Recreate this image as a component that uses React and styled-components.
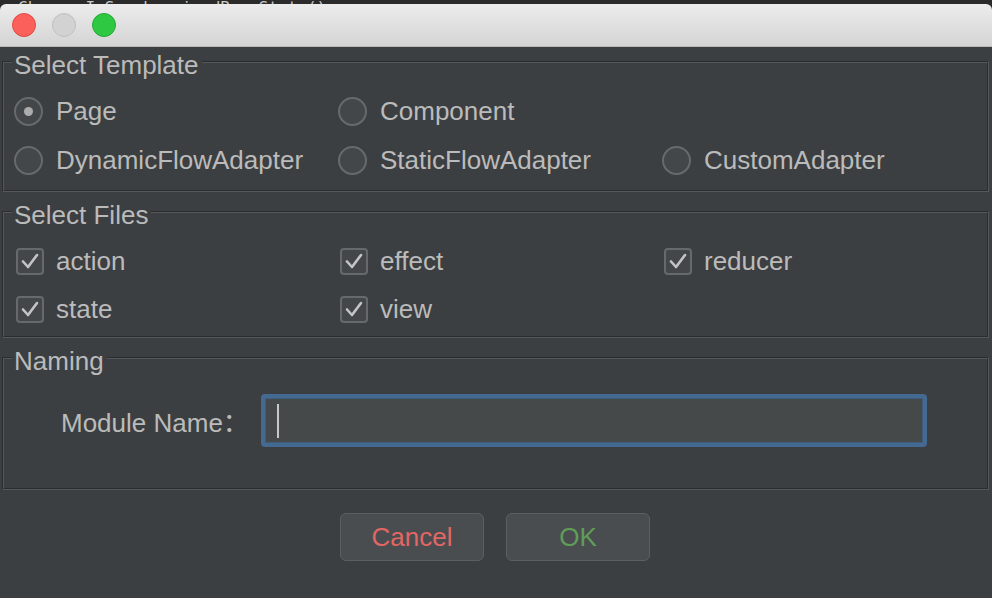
import React from "react";
import styled, { createGlobalStyle } from "styled-components";

const GlobalStyle = createGlobalStyle`
  html, body {
    margin: 0;
    padding: 0;
    background-color: #2b2b2b;
  }
  body {
    font-family: "Liberation Sans", Arial, "Noto Sans CJK SC", sans-serif;
    overflow: hidden;
  }
`;

const DARK = "#2a2c2e";
const LIGHT = "#56595b";

const Backdrop = styled.div`
  height: 4px;
  overflow: hidden;
  background-color: #2b2b2b;
  padding-left: 18px;
  display: flex;
  align-items: flex-end;
`;

const BackdropText = styled.div`
  font-family: "DejaVu Sans Mono", monospace;
  font-size: 16px;
  line-height: 16px;
  color: #c9c9c9;
  white-space: nowrap;
  margin-bottom: -12px;
`;

const Window = styled.div`
  height: 594px;
  background-color: #3c3f41;
  border-radius: 6px 6px 0 0;
  overflow: hidden;
  display: flex;
  flex-direction: column;
`;

const TitleBar = styled.div`
  height: 42px;
  flex-shrink: 0;
  display: flex;
  align-items: center;
  gap: 16px;
  padding-left: 12px;
  background: linear-gradient(#ececec, #d4d4d4);
  border-bottom: 1px solid #b9b9b9;
`;

const Light = styled.span`
  width: 22px;
  height: 22px;
  border-radius: 50%;
  background-color: ${(p) => p.color};
  border: 1px solid ${(p) => p.edge};
`;

const Body = styled.div`
  display: flex;
  flex-direction: column;
  gap: 19px;
  padding: 14px 3px 0 2px;
`;

const Group = styled.div`
  border-top: 1px solid ${DARK};
  border-left: 1px solid ${DARK};
  border-right: 1px solid ${LIGHT};
  border-bottom: 1px solid ${LIGHT};
`;

const GroupInner = styled.div`
  border-top: 1px solid ${LIGHT};
  border-left: 1px solid ${LIGHT};
  border-right: 1px solid ${DARK};
  border-bottom: 1px solid ${DARK};
  padding: 0 10px ${(p) => p.$bottom}px 10px;
`;

const Legend = styled.div`
  position: relative;
  width: fit-content;
  margin: -13px 0 0 -2px;
  padding: 0 3px 0 2px;
  background-color: #3c3f41;
  font-size: 26px;
  line-height: 30px;
  color: #bbbbbb;
`;

const OptionGrid = styled.div`
  display: grid;
  grid-template-columns: repeat(3, 324px);
  grid-auto-rows: ${(p) => p.$row}px;
  margin-top: ${(p) => p.$top}px;
`;

const Option = styled.label`
  display: flex;
  align-items: center;
  font-size: 26px;
  color: #bbbbbb;
  white-space: nowrap;
`;

const RadioCircle = styled.span`
  box-sizing: border-box;
  width: 29px;
  height: 29px;
  border-radius: 50%;
  border: 2px solid #676a6c;
  background-color: #43474a;
  margin-right: 13px;
  display: flex;
  align-items: center;
  justify-content: center;
  &::after {
    content: "";
    display: ${(p) => (p.$checked ? "block" : "none")};
    width: 9px;
    height: 9px;
    border-radius: 50%;
    background-color: #acacac;
  }
`;

const CheckBox = styled.span`
  box-sizing: border-box;
  width: 28px;
  height: 27px;
  border-radius: 4px;
  border: 2px solid #666a6c;
  background-color: #43474a;
  margin: 0 12px 0 2px;
  display: flex;
  align-items: center;
  justify-content: center;
`;

const NameRow = styled.div`
  display: flex;
  align-items: center;
  margin-top: 18px;
  padding-left: 47px;
`;

const NameLabel = styled.span`
  font-size: 26px;
  color: #bbbbbb;
  white-space: nowrap;
`;

const Colon = styled.span`
  font-family: "Noto Sans CJK SC", sans-serif;
`;

const NameInput = styled.div`
  box-sizing: border-box;
  width: 666px;
  height: 53px;
  margin-left: 12px;
  border: 4px solid #456a92;
  border-radius: 4px;
  background-color: #45494a;
  box-shadow: inset 0 0 0 1px #3d5d80;
  display: flex;
  align-items: center;
  padding-left: 12px;
`;

const Caret = styled.span`
  width: 2px;
  height: 34px;
  background-color: #c8c8c8;
`;

const Buttons = styled.div`
  display: flex;
  justify-content: center;
  gap: 22px;
  margin-top: 23px;
  padding-right: 2px;
`;

const Button = styled.button`
  box-sizing: border-box;
  width: 144px;
  height: 48px;
  border: 1.5px solid #5c5f62;
  border-radius: 6px;
  background-color: #4a4d50;
  font-family: "Liberation Sans", Arial, sans-serif;
  font-size: 26px;
  color: ${(p) => p.$tone};
  padding: 0;
`;

const templates = [
  { name: "Page", checked: true },
  { name: "Component" },
  { name: "" },
  { name: "DynamicFlowAdapter" },
  { name: "StaticFlowAdapter" },
  { name: "CustomAdapter" },
];

const files = ["action", "effect", "reducer", "state", "view"];

function Check() {
  return (
    <svg width="20" height="18" viewBox="0 0 20 18">
      <polyline
        points="3,9.5 8,15 17,3"
        fill="none"
        stroke="#c4c4c4"
        strokeWidth="2.6"
        strokeLinecap="round"
        strokeLinejoin="round"
      />
    </svg>
  );
}

export default function App() {
  return (
    <>
      <GlobalStyle />
      <Backdrop>
        <BackdropText>Change IsSynchronizedBaseState()</BackdropText>
      </Backdrop>
      <Window>
        <TitleBar>
          <Light color="#fc605b" edge="#de4b45" />
          <Light color="#d2d2d2" edge="#c0c0c0" />
          <Light color="#2ec842" edge="#25a835" />
        </TitleBar>
        <Body>
          <Group>
            <GroupInner $bottom={5}>
              <Legend>Select Template</Legend>
              <OptionGrid $row={49} $top={7}>
                {templates.map((t, i) =>
                  t.name ? (
                    <Option key={i}>
                      <RadioCircle $checked={t.checked} />
                      {t.name}
                    </Option>
                  ) : (
                    <span key={i} />
                  )
                )}
              </OptionGrid>
            </GroupInner>
          </Group>
          <Group>
            <GroupInner $bottom={3}>
              <Legend>Select Files</Legend>
              <OptionGrid $row={48} $top={7}>
                {files.map((f) => (
                  <Option key={f}>
                    <CheckBox>
                      <Check />
                    </CheckBox>
                    {f}
                  </Option>
                ))}
              </OptionGrid>
            </GroupInner>
          </Group>
          <Group>
            <GroupInner $bottom={41}>
              <Legend>Naming</Legend>
              <NameRow>
                <NameLabel>
                  Module Name<Colon>：</Colon>
                </NameLabel>
                <NameInput>
                  <Caret />
                </NameInput>
              </NameRow>
            </GroupInner>
          </Group>
        </Body>
        <Buttons>
          <Button $tone="#e26664">Cancel</Button>
          <Button $tone="#5f9d58">OK</Button>
        </Buttons>
      </Window>
    </>
  );
}
